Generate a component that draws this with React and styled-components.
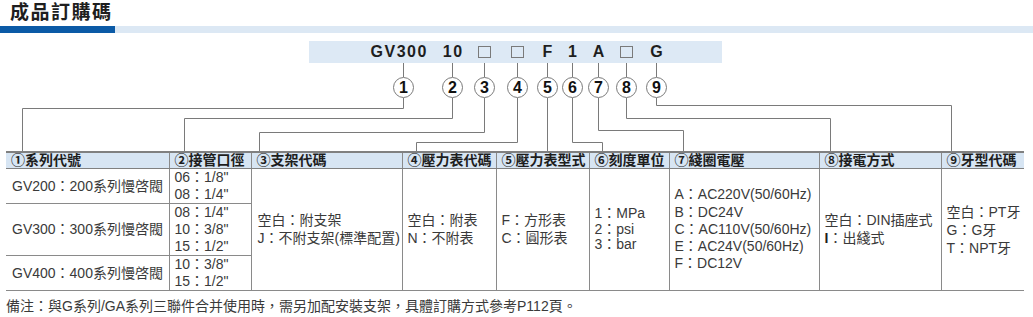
import React from 'react';
import styled, { createGlobalStyle } from 'styled-components';

const GlobalStyle = createGlobalStyle`
  html, body {
    margin: 0;
    padding: 0;
    background: #ffffff;
  }
  body {
    width: 1033px;
    height: 317px;
    overflow: hidden;
    font-family: "Liberation Sans", "Noto Sans CJK TC", sans-serif;
    color: #3a3a3a;
  }
`;

const Title = styled.h2`
  margin: 0;
  padding-left: 10px;
  height: 26px;
  line-height: 25px;
  font-size: 19px;
  font-weight: 700;
  letter-spacing: 1.5px;
  color: #1e1e1e;
`;

const Rule = styled.div`
  height: 7px;
  background: linear-gradient(to right, #0b5aa6 0 115px, #dce8f4 115px 100%);
`;

const Track = styled.div`
  display: flex;
  margin-top: 8px;
  background: linear-gradient(#dde9f5, #dde9f5) no-repeat 309px 0 / 413px 22px;
`;

const Column = styled.div`
  flex-shrink: 0;
  width: 1px;
  margin-left: ${p => p.$dx}px;
  display: flex;
  flex-direction: column;
  align-items: center;
`;

const Code = styled.span`
  height: 22px;
  display: flex;
  align-items: center;
  font-size: 16px;
  font-weight: 700;
  letter-spacing: 1.5px;
  color: #1e1e1e;
  white-space: nowrap;
  transform: translateX(${p => (p.$shift || 0) + 0.75}px);
`;

const Blank = styled.span`
  display: block;
  width: 13px;
  height: 12px;
  border: 1px solid #7a7a7a;
  box-sizing: border-box;
  transform: translateX(-0.75px);
`;

const Tick = styled.span`
  width: 1px;
  height: 14px;
  background: #7a7a7a;
`;

const Circle = styled.span`
  width: 21px;
  height: 21px;
  box-sizing: border-box;
  border: 1px solid #7a7a7a;
  border-radius: 50%;
  background: #ffffff;
  display: flex;
  align-items: center;
  justify-content: center;
  font-size: 16px;
  font-weight: 700;
  color: #111111;
`;

const Leaders = styled.svg`
  display: block;
`;

const Table = styled.table`
  margin-left: 6px;
  width: 1018px;
  border-collapse: collapse;
  table-layout: fixed;
  font-size: 14px;
`;

const Col = styled.col`
  width: ${p => p.$w}px;
`;

const Th = styled.th`
  height: 15px;
  padding: 0 0 0 5px;
  line-height: 15px;
  text-align: left;
  font-weight: 700;
  color: #1e1e1e;
  white-space: nowrap;
  background: #d7e5f3;
  border-top: 2px solid #808080;
  border-bottom: 1px solid #808080;
  border-left: 1px solid #8a8a8a;

  &:first-child {
    border-left: none;
  }
`;

const Td = styled.td`
  height: ${p => (p.$h ? `${p.$h}px` : 'auto')};
  padding: 0 0 0 ${p => (p.$pad ?? 5)}px;
  vertical-align: middle;
  line-height: ${p => (p.$lh ?? 17)}px;
  white-space: nowrap;
  border-left: 1px solid #8a8a8a;
  border-bottom: 1px solid #8a8a8a;

  &:first-child {
    border-left: none;
  }
`;

const Line = styled.div``;

const Strong = styled.b`
  color: #1e1e1e;
`;

const Note = styled.p`
  margin: 7px 0 0 6px;
  font-size: 14px;
  line-height: 16px;
  color: #3a3a3a;
`;

// x of each 1px leader line, left to right
const codes = [
  { label: 'GV300', x: 403, shift: -5 },
  { label: '10', x: 452 },
  { blank: true, x: 484 },
  { blank: true, x: 517 },
  { label: 'F', x: 547 },
  { label: '1', x: 572 },
  { label: 'A', x: 598 },
  { blank: true, x: 626 },
  { label: 'G', x: 656 },
];

// elbow y (from circle bottom) and the column x it lands on
const leaders = [
  { y: 10, to: 22 },
  { y: 20, to: 184 },
  { y: 34, to: 259 },
  { y: 44, to: 416 },
  { y: 53, to: 547 },
  { y: 44, to: 602 },
  { y: 32, to: 683 },
  { y: 20, to: 830 },
  { y: 7, to: 951 },
];

const widths = [163, 82, 151, 94, 93, 80, 150, 122, 83];
const heads = ['①系列代號', '②接管口徑', '③支架代碼', '④壓力表代碼', '⑤壓力表型式', '⑥刻度單位', '⑦綫圈電壓', '⑧接電方式', '⑨牙型代碼'];

const series = [
  { name: 'GV200：200系列慢啓閥', ports: ['06：1/8"', '08：1/4"'], h: 33 },
  { name: 'GV300：300系列慢啓閥', ports: ['08：1/4"', '10：3/8"', '15：1/2"'], h: 51 },
  { name: 'GV400：400系列慢啓閥', ports: ['10：3/8"', '15：1/2"'], h: 34 },
];

const options = [
  { lines: ['空白：附支架', 'J：不附支架(標準配置)'] },
  { lines: ['空白：附表', 'N：不附表'] },
  { lines: ['F：方形表', 'C：圓形表'] },
  { lines: ['1：MPa', '2：psi', '3：bar'], tight: true },
  { lines: ['A：AC220V(50/60Hz)', 'B：DC24V', 'C：AC110V(50/60Hz)', 'E：AC24V(50/60Hz)', 'F：DC12V'] },
  { lines: ['空白：DIN插座式', <><Strong>I</Strong>：出綫式</>] },
  { lines: ['空白：PT牙', 'G：G牙', 'T：NPT牙'], loose: true },
];

export default function App() {
  return (
    <>
      <GlobalStyle />
      <Title>成品訂購碼</Title>
      <Rule />
      <Track>
        {codes.map((c, i) => (
          <Column key={i} $dx={i === 0 ? c.x : c.x - codes[i - 1].x - 1}>
            {c.blank ? (
              <Code><Blank /></Code>
            ) : (
              <Code $shift={c.shift}>{c.label}</Code>
            )}
            <Tick />
            <Circle>{i + 1}</Circle>
          </Column>
        ))}
      </Track>
      <Leaders width="1033" height="53" viewBox="0 0 1033 53">
        {codes.map((c, i) => {
          const l = leaders[i];
          return (
            <path
              key={i}
              d={`M${c.x + 0.5} 0 V${l.y + 0.5} H${l.to + 0.5} V53`}
              fill="none"
              stroke="#7a7a7a"
              strokeWidth="1"
            />
          );
        })}
      </Leaders>
      <Table>
        <colgroup>
          {widths.map((w, i) => <Col key={i} $w={w} />)}
        </colgroup>
        <thead>
          <tr>
            {heads.map(h => <Th key={h}>{h}</Th>)}
          </tr>
        </thead>
        <tbody>
          {series.map((s, r) => (
            <tr key={s.name}>
              <Td $h={s.h} $pad={6}>{s.name}</Td>
              <Td>{s.ports.map(p => <Line key={p}>{p}</Line>)}</Td>
              {r === 0 && options.map((o, i) => (
                <Td key={i} rowSpan={3} $pad={i === 0 ? 6 : 5} $lh={o.tight ? 15.5 : o.loose ? 18 : 17.3}>
                  {o.lines.map((t, j) => <Line key={j}>{t}</Line>)}
                </Td>
              ))}
            </tr>
          ))}
        </tbody>
      </Table>
      <Note>備注：與G系列/GA系列三聯件合并使用時，需另加配安裝支架，具體訂購方式參考P112頁。</Note>
    </>
  );
}
